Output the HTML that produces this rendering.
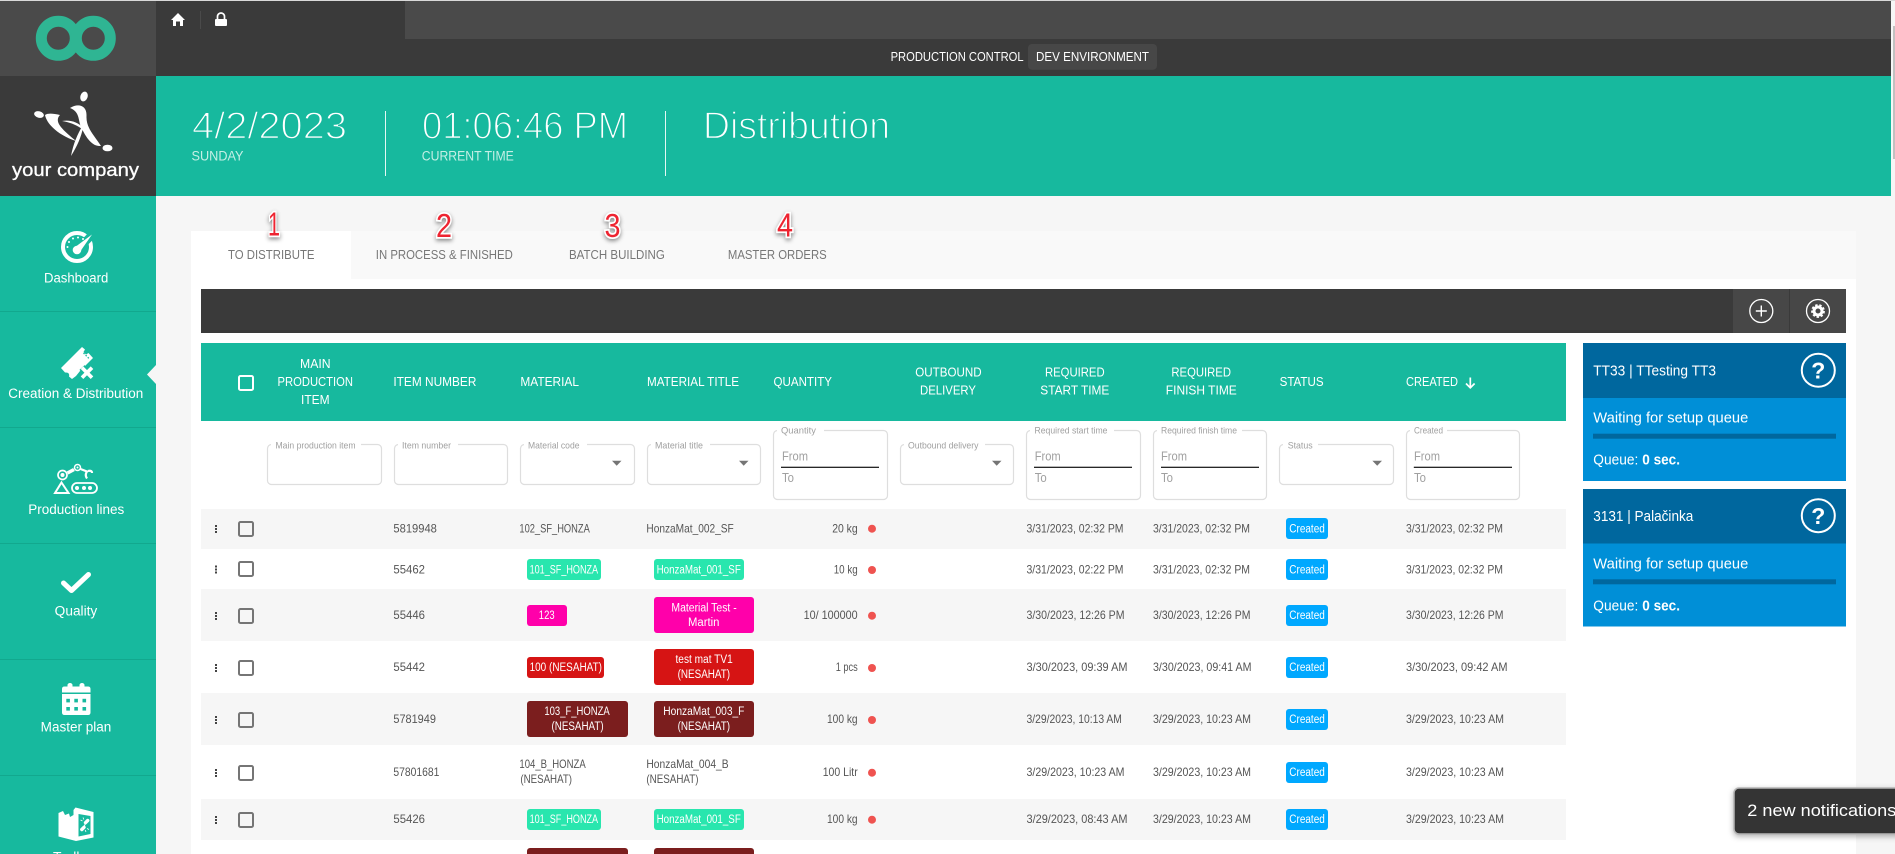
<!DOCTYPE html>
<html lang="en">
<head>
<meta charset="utf-8">
<title>Distribution</title>
<style>
html,body{margin:0;padding:0;width:1895px;height:854px;overflow:hidden;background:#f6f6f6}
svg{display:block;font-family:"Liberation Sans",Arial,sans-serif}
text{white-space:pre}
.h{font-size:12.5px;fill:#fff}
.r{font-size:12px;fill:#555}
.b{font-size:11.5px;fill:#fff}
.s{font-size:13.5px;fill:#fff}
.tab{font-size:12.5px;fill:#777}
.l{font-size:9.5px;fill:#a0a0a0}
.f{font-size:12.5px;fill:#a0a0a0}
.big{font-size:38px;fill:#fff;stroke:#17b99e;stroke-width:1.4px}
.sub{font-size:13.5px;fill:#c4efe5}
.c{font-size:15px;fill:#fff}
.n{font-size:33px;fill:#ee2431;stroke:#fff;stroke-width:3.5px;paint-order:stroke;filter:drop-shadow(0 2px 2px rgba(0,0,0,.45))}
.box{fill:#fff;stroke:#dedede;stroke-width:1.2}
.cb{fill:none;stroke:#757575;stroke-width:2}
.hole{fill:#fff}
</style>
</head>
<body>
<svg width="1895" height="854" viewBox="0 0 1895 854" xmlns="http://www.w3.org/2000/svg">
<!-- page -->
<rect width="1895" height="854" fill="#f6f6f6"/>
<rect width="1895" height="1" fill="#d9d9d9"/>
<rect x="1893" y="26" width="2" height="133" fill="#c1c1c1"/>

<!-- top bar -->
<rect x="0" y="1" width="156" height="75" fill="#4a4a4a"/>
<rect x="156" y="1" width="1735" height="75" fill="#3a3a3a"/>
<rect x="405" y="1" width="1486" height="38" fill="#4a4a4a"/>
<circle cx="58.3" cy="38.3" r="17" fill="none" stroke="#2fb593" stroke-width="11"/>
<circle cx="93.3" cy="38.3" r="17" fill="none" stroke="#2fb593" stroke-width="11"/>
<path d="M178 13 L185 20 H183 V26 H180 V21.5 H176 V26 H173 V20 H171Z" fill="#fff"/>
<rect x="200" y="11" width="1" height="18" fill="#4a4a4a"/>
<rect x="215" y="19" width="12" height="7" rx="1" fill="#fff"/>
<path d="M217.5 19.5V16.5a3.5 3.5 0 0 1 7 0V19.5" fill="none" stroke="#fff" stroke-width="1.7"/>
<text x="890.6" y="61" font-size="12.5" fill="#fff" textLength="133" lengthAdjust="spacingAndGlyphs">PRODUCTION CONTROL</text>
<rect x="1028" y="44" width="129" height="25.7" rx="4" fill="#474747"/>
<text x="1036" y="61" font-size="12.5" fill="#fff" textLength="113" lengthAdjust="spacingAndGlyphs">DEV ENVIRONMENT</text>

<!-- company -->
<rect x="0" y="76" width="156" height="120" fill="#3a3a3a"/>
<g fill="#fff">
<ellipse cx="84" cy="96.5" rx="3.6" ry="5" transform="rotate(20 84 96.5)"/>
<ellipse cx="39" cy="114.5" rx="5" ry="3.2" transform="rotate(15 39 114.5)"/>
<ellipse cx="107.5" cy="148" rx="5" ry="3.3"/>
<path d="M45 115C47 125 60 136 76 141C64 131 53 122 60 115C53 113.500 48 113 45 115Z"/>
<path d="M70 108C78 103 87 105 86.500 116C86 128 94 135 101 146C91 147 85 135 81 127C78 120 80 112 70 108Z"/>
<path d="M62 121C73 119 83 124 89 136C83 128 74 123 62 121Z"/>
<path d="M71 156C74 140 80 130 84 123C82 135 78 145 71 156Z"/>
</g>
<text x="12" y="176" font-size="18" fill="#fff" stroke="#fff" stroke-width=".3" textLength="127" lengthAdjust="spacingAndGlyphs">your company</text>

<!-- teal header -->
<rect x="156" y="76" width="1735" height="120" fill="#17b99e"/>
<text class="big" x="192" y="138.5" textLength="155" lengthAdjust="spacingAndGlyphs">4/2/2023</text>
<text class="sub" x="191.5" y="160.5" textLength="52" lengthAdjust="spacingAndGlyphs">SUNDAY</text>
<rect x="385" y="111" width="1" height="65" fill="#e4f7f3"/>
<text class="big" x="422" y="138.5" textLength="206" lengthAdjust="spacingAndGlyphs">01:06:46 PM</text>
<text class="sub" x="421.8" y="160.5" textLength="92" lengthAdjust="spacingAndGlyphs">CURRENT TIME</text>
<rect x="665" y="111" width="1" height="65" fill="#e4f7f3"/>
<text class="big" x="703" y="138.5" textLength="187" lengthAdjust="spacingAndGlyphs">Distribution</text>

<!-- sidebar -->
<rect x="0" y="196" width="156" height="658" fill="#17b99e"/>
<g fill="#12a88e">
<rect x="0" y="311" width="156" height="1"/>
<rect x="0" y="427" width="156" height="1"/>
<rect x="0" y="543" width="156" height="1"/>
<rect x="0" y="659" width="156" height="1"/>
<rect x="0" y="775" width="156" height="1"/>
</g>
<path d="M147 374.5L156 365V384Z" fill="#f6f6f6"/>
<!-- gauge -->
<circle cx="77" cy="247" r="14" fill="none" stroke="#fff" stroke-width="4"/>
<path d="M77 250L95 232" stroke="#17b99e" stroke-width="8"/>
<path d="M74.5 247.5L92 234.5L79.5 252.5Z" fill="#fff"/>
<circle cx="77" cy="250" r="4.3" fill="#fff"/>
<g fill="#fff"><circle cx="67.5" cy="247" r="1"/><circle cx="69" cy="242" r="1"/><circle cx="73" cy="238.5" r="1"/><circle cx="78" cy="237.5" r="1"/><circle cx="83" cy="239" r="1"/></g>
<text class="s" x="44" y="282.5" textLength="64.3" lengthAdjust="spacingAndGlyphs">Dashboard</text>
<!-- ticket -->
<path d="M61 368L82 347L85 349.5L83.5 352L86 354.5L88.5 353L93 358L80 371L76 376L72 379L69 376.5Q70 372 65 372.5Z" fill="#fff"/>
<path d="M83.5 353L89 358.5" stroke="#17b99e" stroke-width="1.3" stroke-dasharray="1.5 1.5"/>
<path d="M82 367.5L92 378M92 367.5L82 378" stroke="#17b99e" stroke-width="7"/>
<path d="M82 367.7L92 377.7M92 367.7L82 377.7" stroke="#fff" stroke-width="3.6"/>
<text class="s" x="8.3" y="398" textLength="135" lengthAdjust="spacingAndGlyphs">Creation &amp; Distribution</text>
<!-- robot -->
<g fill="none" stroke="#fff">
<circle cx="62.500" cy="475" r="4.5" stroke-width="1.7"/>
<circle cx="77.500" cy="467.5" r="3" stroke-width="1.5"/>
<path d="M67.500 473L74 469.500" stroke-width="3.5"/>
<path d="M80.500 469L87 471.500Q84.500 475 87 478.500M88 471Q92 470 92 473" stroke-width="2.2"/>
<path d="M61.500 482.500L68.500 493H55Z" stroke-width="2"/>
<rect x="72" y="483" width="25" height="10" rx="5" stroke-width="1.8"/>
</g>
<g fill="#fff"><circle cx="77" cy="488" r="2"/><circle cx="84" cy="488" r="2"/><circle cx="90" cy="488" r="2"/></g>
<circle cx="62.500" cy="475" r="2" fill="#fff"/><circle cx="77.500" cy="467.5" r="1" fill="#fff"/>
<text class="s" x="28.3" y="514" textLength="96" lengthAdjust="spacingAndGlyphs">Production lines</text>
<!-- check -->
<path d="M63.500 583L71.500 590.500L88.500 574.500" fill="none" stroke="#fff" stroke-width="5" stroke-linecap="round" stroke-linejoin="round"/>
<text class="s" x="54.7" y="615.5" textLength="42.6" lengthAdjust="spacingAndGlyphs">Quality</text>
<!-- calendar -->
<path d="M62 689q0-2.500 2.500-2.500H67.500V685a2.500 2 0 0 1 5 0v1.500h7V685a2.500 2 0 0 1 5 0v1.500h3.500q2.500 0 2.500 2.500V692.500H62Z" fill="#fff"/>
<path d="M62 694H90.500V712.500q0 2.500-2.500 2.500H64.500q-2.500 0-2.500-2.500Z" fill="#fff"/>
<g fill="#17b99e"><rect x="66.3" y="698.8" width="3.6" height="3.6"/><rect x="74.3" y="698.8" width="3.6" height="3.6"/><rect x="82.5" y="698.8" width="3.6" height="3.6"/><rect x="66.3" y="707" width="3.6" height="3.6"/><rect x="74.3" y="707" width="3.6" height="3.6"/><rect x="82.5" y="707" width="3.6" height="3.6"/></g>
<text class="s" x="40.7" y="731.5" textLength="70.6" lengthAdjust="spacingAndGlyphs">Master plan</text>
<!-- box -->
<path d="M58.500 813L63 811L65 815L69 813.500L70 817L73.500 815V810L75.500 807.500L93.500 812V837.500L76 841L58.500 836.500Z" fill="#fff"/>
<path d="M78.500 814L90.500 816V834L78.500 836.500Z" fill="#17b99e"/>
<path d="M81.800 829.500L84 827.300M85.500 822.700L87.700 820.500" stroke="#fff" stroke-width="3.400" stroke-linecap="round"/>
<path d="M81.800 829.500L87.700 820.500" stroke="#fff" stroke-width="1"/>
<path d="M80.500 820l2 1M83 817.500l.8 2M86 832l-.8-2M89 829.500l-2-1" stroke="#fff" stroke-width=".8"/>
<text class="s" x="53" y="861.5" textLength="48" lengthAdjust="spacingAndGlyphs">Trolleys</text>

<!-- panel + tabs -->
<rect x="191" y="231" width="1665" height="623" fill="#fff"/>
<rect x="351" y="231" width="1505" height="48" fill="#f9f9f9"/>
<text class="tab" x="228" y="259.2" textLength="86.5" lengthAdjust="spacingAndGlyphs">TO DISTRIBUTE</text>
<text class="tab" x="375.8" y="259.2" textLength="137" lengthAdjust="spacingAndGlyphs">IN PROCESS &amp; FINISHED</text>
<text class="tab" x="569" y="259.2" textLength="95.8" lengthAdjust="spacingAndGlyphs">BATCH BUILDING</text>
<text class="tab" x="727.9" y="259.2" textLength="98.8" lengthAdjust="spacingAndGlyphs">MASTER ORDERS</text>
<text class="n" x="268" y="235.500" textLength="12" lengthAdjust="spacingAndGlyphs">1</text>
<text class="n" x="436" y="237" textLength="16" lengthAdjust="spacingAndGlyphs">2</text>
<text class="n" x="604.500" y="237" textLength="16" lengthAdjust="spacingAndGlyphs">3</text>
<text class="n" x="777" y="236.500" textLength="16" lengthAdjust="spacingAndGlyphs">4</text>

<!-- toolbar -->
<rect x="201" y="289" width="1645" height="44" fill="#3a3a3a"/>
<rect x="1733" y="289" width="56" height="44" fill="#474747"/>
<rect x="1790" y="289" width="56" height="44" fill="#474747"/>
<circle cx="1761.3" cy="311" r="11.5" fill="none" stroke="#fff" stroke-width="1.3"/>
<path d="M1761.3 305.500v11M1755.8 311h11" stroke="#fff" stroke-width="1.4"/>
<circle cx="1818" cy="311" r="11.5" fill="none" stroke="#fff" stroke-width="1.3"/>
<circle cx="1818" cy="311" r="4" fill="none" stroke="#fff" stroke-width="3"/>
<circle cx="1818" cy="311" r="6" fill="none" stroke="#fff" stroke-width="1.8" stroke-dasharray="2.4 1.8"/>

<!-- table head -->
<rect x="201" y="343" width="1365" height="78" fill="#17b99e"/>
<rect x="239" y="376" width="14" height="14" rx="1.5" fill="none" stroke="#fff" stroke-width="2"/>
<text class="h" x="300" y="368" textLength="30.6" lengthAdjust="spacingAndGlyphs">MAIN</text>
<text class="h" x="277.5" y="386" textLength="75.5" lengthAdjust="spacingAndGlyphs">PRODUCTION</text>
<text class="h" x="301" y="404" textLength="28.6" lengthAdjust="spacingAndGlyphs">ITEM</text>
<text class="h" x="393.4" y="386" textLength="83" lengthAdjust="spacingAndGlyphs">ITEM NUMBER</text>
<text class="h" x="520.4" y="386" textLength="58.6" lengthAdjust="spacingAndGlyphs">MATERIAL</text>
<text class="h" x="647" y="386" textLength="92" lengthAdjust="spacingAndGlyphs">MATERIAL TITLE</text>
<text class="h" x="773.5" y="386" textLength="58.5" lengthAdjust="spacingAndGlyphs">QUANTITY</text>
<text class="h" x="915.3" y="376.5" textLength="66.3" lengthAdjust="spacingAndGlyphs">OUTBOUND</text>
<text class="h" x="920" y="394.5" textLength="56" lengthAdjust="spacingAndGlyphs">DELIVERY</text>
<text class="h" x="1045" y="376.5" textLength="59.6" lengthAdjust="spacingAndGlyphs">REQUIRED</text>
<text class="h" x="1040.3" y="394.5" textLength="69" lengthAdjust="spacingAndGlyphs">START TIME</text>
<text class="h" x="1171.4" y="376.5" textLength="59.6" lengthAdjust="spacingAndGlyphs">REQUIRED</text>
<text class="h" x="1165.8" y="394.5" textLength="71" lengthAdjust="spacingAndGlyphs">FINISH TIME</text>
<text class="h" x="1279.6" y="386" textLength="44" lengthAdjust="spacingAndGlyphs">STATUS</text>
<text class="h" x="1406" y="386" textLength="52" lengthAdjust="spacingAndGlyphs">CREATED</text>
<path d="M1470.3 377.500V387.500M1466 383.500L1470.3 387.800L1474.6 383.500" fill="none" stroke="#fff" stroke-width="1.7"/>

<!-- filters -->
<g>
<rect class="box" x="267.5" y="444.5" width="114" height="40" rx="4"/><rect class="hole" x="271" y="441" width="90" height="7"/>
<text class="l" x="275.5" y="448.3" textLength="80" lengthAdjust="spacingAndGlyphs">Main production item</text>
<rect class="box" x="394.5" y="444.5" width="113" height="40" rx="4"/><rect class="hole" x="398" y="441" width="60" height="7"/>
<text class="l" x="402" y="448.3" textLength="49" lengthAdjust="spacingAndGlyphs">Item number</text>
<rect class="box" x="520.5" y="444.5" width="114" height="40" rx="4"/><rect class="hole" x="524" y="441" width="63" height="7"/>
<text class="l" x="528" y="448.3" textLength="51.5" lengthAdjust="spacingAndGlyphs">Material code</text>
<path d="M612 460.7H621.5L616.7 465.7Z" fill="#757575"/>
<rect class="box" x="647.5" y="444.5" width="113" height="40" rx="4"/><rect class="hole" x="651" y="441" width="59" height="7"/>
<text class="l" x="655" y="448.3" textLength="48" lengthAdjust="spacingAndGlyphs">Material title</text>
<path d="M739 460.7H748.5L743.7 465.7Z" fill="#757575"/>
<rect class="box" x="773.5" y="430.5" width="114" height="69" rx="4"/><rect class="hole" x="777" y="427" width="47" height="7"/>
<text class="l" x="781" y="433.5" textLength="35" lengthAdjust="spacingAndGlyphs">Quantity</text>
<text class="f" x="782" y="460.5" textLength="26" lengthAdjust="spacingAndGlyphs">From</text>
<rect x="781" y="466.7" width="98" height="1.2" fill="#111"/>
<text class="f" x="782" y="481.8" textLength="12" lengthAdjust="spacingAndGlyphs">To</text>
<rect class="box" x="900.5" y="444.5" width="113" height="40" rx="4"/><rect class="hole" x="904" y="441" width="81" height="7"/>
<text class="l" x="908" y="448.3" textLength="70.5" lengthAdjust="spacingAndGlyphs">Outbound delivery</text>
<path d="M992 460.7H1001.5L996.7 465.7Z" fill="#757575"/>
<rect class="box" x="1026.5" y="430.5" width="114" height="69" rx="4"/><rect class="hole" x="1030" y="427" width="84" height="7"/>
<text class="l" x="1034.5" y="433.5" textLength="73" lengthAdjust="spacingAndGlyphs">Required start time</text>
<text class="f" x="1034.7" y="460.5" textLength="26" lengthAdjust="spacingAndGlyphs">From</text>
<rect x="1034" y="466.7" width="98" height="1.2" fill="#111"/>
<text class="f" x="1034.7" y="481.8" textLength="12" lengthAdjust="spacingAndGlyphs">To</text>
<rect class="box" x="1153.5" y="430.5" width="113" height="69" rx="4"/><rect class="hole" x="1157" y="427" width="85" height="7"/>
<text class="l" x="1161" y="433.5" textLength="76" lengthAdjust="spacingAndGlyphs">Required finish time</text>
<text class="f" x="1161" y="460.5" textLength="26" lengthAdjust="spacingAndGlyphs">From</text>
<rect x="1161" y="466.7" width="98" height="1.2" fill="#111"/>
<text class="f" x="1161" y="481.8" textLength="12" lengthAdjust="spacingAndGlyphs">To</text>
<rect class="box" x="1279.5" y="444.5" width="114" height="40" rx="4"/><rect class="hole" x="1283" y="441" width="35" height="7"/>
<text class="l" x="1287.7" y="448.3" textLength="25" lengthAdjust="spacingAndGlyphs">Status</text>
<path d="M1372.4 460.7H1382L1377.2 465.7Z" fill="#757575"/>
<rect class="box" x="1406.5" y="430.5" width="113" height="69" rx="4"/><rect class="hole" x="1410" y="427" width="37" height="7"/>
<text class="l" x="1414" y="433.5" textLength="29" lengthAdjust="spacingAndGlyphs">Created</text>
<text class="f" x="1414" y="460.5" textLength="26" lengthAdjust="spacingAndGlyphs">From</text>
<rect x="1413.8" y="466.7" width="98.2" height="1.2" fill="#111"/>
<text class="f" x="1414" y="481.8" textLength="12" lengthAdjust="spacingAndGlyphs">To</text>
</g>

<!-- rows bg -->
<g fill="#f6f6f6">
<rect x="201" y="509" width="1365" height="40"/>
<rect x="201" y="589" width="1365" height="52"/>
<rect x="201" y="693" width="1365" height="52"/>
<rect x="201" y="799" width="1365" height="41"/>
</g>

<!-- kebab + checkbox -->
<g fill="#444">
<rect x="215" y="525" width="2" height="2"/><rect x="215" y="528" width="2" height="2"/><rect x="215" y="531" width="2" height="2"/>
<rect x="215" y="565.5" width="2" height="2"/><rect x="215" y="568.5" width="2" height="2"/><rect x="215" y="571.5" width="2" height="2"/>
<rect x="215" y="612" width="2" height="2"/><rect x="215" y="615" width="2" height="2"/><rect x="215" y="618" width="2" height="2"/>
<rect x="215" y="664" width="2" height="2"/><rect x="215" y="667" width="2" height="2"/><rect x="215" y="670" width="2" height="2"/>
<rect x="215" y="716" width="2" height="2"/><rect x="215" y="719" width="2" height="2"/><rect x="215" y="722" width="2" height="2"/>
<rect x="215" y="769" width="2" height="2"/><rect x="215" y="772" width="2" height="2"/><rect x="215" y="775" width="2" height="2"/>
<rect x="215" y="816" width="2" height="2"/><rect x="215" y="819" width="2" height="2"/><rect x="215" y="822" width="2" height="2"/>
</g>
<rect class="cb" x="239" y="522" width="14" height="14" rx="1.5"/>
<rect class="cb" x="239" y="562" width="14" height="14" rx="1.5"/>
<rect class="cb" x="239" y="609" width="14" height="14" rx="1.5"/>
<rect class="cb" x="239" y="661" width="14" height="14" rx="1.5"/>
<rect class="cb" x="239" y="713" width="14" height="14" rx="1.5"/>
<rect class="cb" x="239" y="766" width="14" height="14" rx="1.5"/>
<rect class="cb" x="239" y="813" width="14" height="14" rx="1.5"/>

<!-- item numbers -->
<text class="r" x="393.4" y="532.3" textLength="43.5" lengthAdjust="spacingAndGlyphs">5819948</text>
<text class="r" x="393.4" y="573.3" textLength="31.6" lengthAdjust="spacingAndGlyphs">55462</text>
<text class="r" x="393.4" y="619" textLength="31.6" lengthAdjust="spacingAndGlyphs">55446</text>
<text class="r" x="393.4" y="671" textLength="31.6" lengthAdjust="spacingAndGlyphs">55442</text>
<text class="r" x="393.4" y="723" textLength="42.5" lengthAdjust="spacingAndGlyphs">5781949</text>
<text class="r" x="393.4" y="776" textLength="46" lengthAdjust="spacingAndGlyphs">57801681</text>
<text class="r" x="393.4" y="823" textLength="31.6" lengthAdjust="spacingAndGlyphs">55426</text>

<!-- materials -->
<text class="r" x="519.4" y="532.3" textLength="70.4" lengthAdjust="spacingAndGlyphs">102_SF_HONZA</text>
<text class="r" x="646.4" y="532.3" textLength="87.3" lengthAdjust="spacingAndGlyphs">HonzaMat_002_SF</text>

<rect x="527" y="559" width="74" height="21" rx="3" fill="#29e6ae"/>
<text class="b" x="529.6" y="573.3" textLength="68.5" lengthAdjust="spacingAndGlyphs">101_SF_HONZA</text>
<rect x="654" y="559" width="90" height="21" rx="3" fill="#29e6ae"/>
<text class="b" x="656.6" y="573.3" textLength="84.2" lengthAdjust="spacingAndGlyphs">HonzaMat_001_SF</text>

<rect x="527" y="605" width="40" height="21" rx="3" fill="#ff00aa"/>
<text class="b" x="538.8" y="619" textLength="15.8" lengthAdjust="spacingAndGlyphs">123</text>
<rect x="654" y="597" width="100" height="36" rx="3" fill="#ff00aa"/>
<text class="b" x="671.4" y="611.3" textLength="65.3" lengthAdjust="spacingAndGlyphs">Material Test -</text>
<text class="b" x="688" y="626" textLength="31.4" lengthAdjust="spacingAndGlyphs">Martin</text>

<rect x="527" y="657" width="77" height="21" rx="3" fill="#d61414"/>
<text class="b" x="529.6" y="671" textLength="72.4" lengthAdjust="spacingAndGlyphs">100 (NESAHAT)</text>
<rect x="654" y="649" width="100" height="36" rx="3" fill="#d61414"/>
<text class="b" x="675.5" y="663" textLength="57.2" lengthAdjust="spacingAndGlyphs">test mat TV1</text>
<text class="b" x="677.6" y="678" textLength="52.5" lengthAdjust="spacingAndGlyphs">(NESAHAT)</text>

<rect x="527" y="701" width="101" height="36" rx="3" fill="#7b1e1e"/>
<text class="b" x="544.4" y="715" textLength="65.3" lengthAdjust="spacingAndGlyphs">103_F_HONZA</text>
<text class="b" x="551.5" y="730" textLength="52.1" lengthAdjust="spacingAndGlyphs">(NESAHAT)</text>
<rect x="654" y="701" width="100" height="36" rx="3" fill="#7b1e1e"/>
<text class="b" x="663.3" y="715" textLength="81.1" lengthAdjust="spacingAndGlyphs">HonzaMat_003_F</text>
<text class="b" x="677.6" y="730" textLength="52.5" lengthAdjust="spacingAndGlyphs">(NESAHAT)</text>

<text class="r" x="519.4" y="768" textLength="66.3" lengthAdjust="spacingAndGlyphs">104_B_HONZA</text>
<text class="r" x="520.4" y="783" textLength="51.6" lengthAdjust="spacingAndGlyphs">(NESAHAT)</text>
<text class="r" x="646.4" y="768" textLength="82.2" lengthAdjust="spacingAndGlyphs">HonzaMat_004_B</text>
<text class="r" x="646.4" y="783" textLength="52.1" lengthAdjust="spacingAndGlyphs">(NESAHAT)</text>

<rect x="527" y="809" width="74" height="21" rx="3" fill="#29e6ae"/>
<text class="b" x="529.6" y="823" textLength="68.5" lengthAdjust="spacingAndGlyphs">101_SF_HONZA</text>
<rect x="654" y="809" width="90" height="21" rx="3" fill="#29e6ae"/>
<text class="b" x="656.6" y="823" textLength="84.2" lengthAdjust="spacingAndGlyphs">HonzaMat_001_SF</text>

<rect x="527" y="848" width="101" height="20" rx="3" fill="#7b1e1e"/>
<rect x="654" y="848" width="100" height="20" rx="3" fill="#7b1e1e"/>

<!-- quantity -->
<text class="r" x="832.2" y="532.3" textLength="25.5" lengthAdjust="spacingAndGlyphs">20 kg</text>
<text class="r" x="833.7" y="573.3" textLength="24" lengthAdjust="spacingAndGlyphs">10 kg</text>
<text class="r" x="803.6" y="619" textLength="54" lengthAdjust="spacingAndGlyphs">10/ 100000</text>
<text class="r" x="835.7" y="671" textLength="22" lengthAdjust="spacingAndGlyphs">1 pcs</text>
<text class="r" x="827" y="723" textLength="30.6" lengthAdjust="spacingAndGlyphs">100 kg</text>
<text class="r" x="822.7" y="776" textLength="35" lengthAdjust="spacingAndGlyphs">100 Litr</text>
<text class="r" x="827" y="823" textLength="30.6" lengthAdjust="spacingAndGlyphs">100 kg</text>
<g fill="#ef5350">
<circle cx="872" cy="528.7" r="4"/><circle cx="872" cy="570" r="4"/><circle cx="872" cy="615.7" r="4"/><circle cx="872" cy="668" r="4"/><circle cx="872" cy="720" r="4"/><circle cx="872" cy="772.7" r="4"/><circle cx="872" cy="819.7" r="4"/>
</g>

<!-- dates col 1 -->
<text class="r" x="1026.5" y="532.3" textLength="97" lengthAdjust="spacingAndGlyphs">3/31/2023, 02:32 PM</text>
<text class="r" x="1026.5" y="573.3" textLength="97" lengthAdjust="spacingAndGlyphs">3/31/2023, 02:22 PM</text>
<text class="r" x="1026.5" y="619" textLength="98" lengthAdjust="spacingAndGlyphs">3/30/2023, 12:26 PM</text>
<text class="r" x="1026.5" y="671" textLength="101" lengthAdjust="spacingAndGlyphs">3/30/2023, 09:39 AM</text>
<text class="r" x="1026.5" y="723" textLength="95.4" lengthAdjust="spacingAndGlyphs">3/29/2023, 10:13 AM</text>
<text class="r" x="1026.5" y="776" textLength="98" lengthAdjust="spacingAndGlyphs">3/29/2023, 10:23 AM</text>
<text class="r" x="1026.5" y="823" textLength="101" lengthAdjust="spacingAndGlyphs">3/29/2023, 08:43 AM</text>
<!-- dates col 2 -->
<text class="r" x="1153" y="532.3" textLength="97" lengthAdjust="spacingAndGlyphs">3/31/2023, 02:32 PM</text>
<text class="r" x="1153" y="573.3" textLength="97" lengthAdjust="spacingAndGlyphs">3/31/2023, 02:32 PM</text>
<text class="r" x="1153" y="619" textLength="97.5" lengthAdjust="spacingAndGlyphs">3/30/2023, 12:26 PM</text>
<text class="r" x="1153" y="671" textLength="98.5" lengthAdjust="spacingAndGlyphs">3/30/2023, 09:41 AM</text>
<text class="r" x="1153" y="723" textLength="98" lengthAdjust="spacingAndGlyphs">3/29/2023, 10:23 AM</text>
<text class="r" x="1153" y="776" textLength="98" lengthAdjust="spacingAndGlyphs">3/29/2023, 10:23 AM</text>
<text class="r" x="1153" y="823" textLength="98" lengthAdjust="spacingAndGlyphs">3/29/2023, 10:23 AM</text>
<!-- status -->
<g fill="#00a8ff">
<rect x="1286" y="518" width="42" height="21" rx="3"/><rect x="1286" y="559" width="42" height="21" rx="3"/><rect x="1286" y="605" width="42" height="21" rx="3"/><rect x="1286" y="657" width="42" height="21" rx="3"/><rect x="1286" y="709" width="42" height="21" rx="3"/><rect x="1286" y="762" width="42" height="21" rx="3"/><rect x="1286" y="809" width="42" height="21" rx="3"/>
</g>
<text class="b" x="1289.3" y="532.3" textLength="35.5" lengthAdjust="spacingAndGlyphs">Created</text>
<text class="b" x="1289.3" y="573.3" textLength="35.5" lengthAdjust="spacingAndGlyphs">Created</text>
<text class="b" x="1289.3" y="619" textLength="35.5" lengthAdjust="spacingAndGlyphs">Created</text>
<text class="b" x="1289.3" y="671" textLength="35.5" lengthAdjust="spacingAndGlyphs">Created</text>
<text class="b" x="1289.3" y="723" textLength="35.5" lengthAdjust="spacingAndGlyphs">Created</text>
<text class="b" x="1289.3" y="776" textLength="35.5" lengthAdjust="spacingAndGlyphs">Created</text>
<text class="b" x="1289.3" y="823" textLength="35.5" lengthAdjust="spacingAndGlyphs">Created</text>
<!-- dates col 3 -->
<text class="r" x="1406" y="532.3" textLength="97" lengthAdjust="spacingAndGlyphs">3/31/2023, 02:32 PM</text>
<text class="r" x="1406" y="573.3" textLength="97" lengthAdjust="spacingAndGlyphs">3/31/2023, 02:32 PM</text>
<text class="r" x="1406" y="619" textLength="97.5" lengthAdjust="spacingAndGlyphs">3/30/2023, 12:26 PM</text>
<text class="r" x="1406" y="671" textLength="101.5" lengthAdjust="spacingAndGlyphs">3/30/2023, 09:42 AM</text>
<text class="r" x="1406" y="723" textLength="98" lengthAdjust="spacingAndGlyphs">3/29/2023, 10:23 AM</text>
<text class="r" x="1406" y="776" textLength="98" lengthAdjust="spacingAndGlyphs">3/29/2023, 10:23 AM</text>
<text class="r" x="1406" y="823" textLength="98" lengthAdjust="spacingAndGlyphs">3/29/2023, 10:23 AM</text>

<!-- right cards -->
<rect x="1583" y="343" width="263" height="55" fill="#00679e"/>
<rect x="1583" y="398" width="263" height="83" fill="#008fd7"/>
<text class="c" x="1593.3" y="375.5" textLength="122.7" lengthAdjust="spacingAndGlyphs">TT33 | TTesting TT3</text>
<circle cx="1818.3" cy="370.3" r="16.5" fill="none" stroke="#fff" stroke-width="2"/>
<text x="1818.3" y="378.5" font-size="23" font-weight="700" fill="#fff" text-anchor="middle">?</text>
<text class="c" x="1593.3" y="422.5" textLength="155" lengthAdjust="spacingAndGlyphs">Waiting for setup queue</text>
<rect x="1593" y="433.7" width="243" height="5" fill="#00679e"/>
<text class="c" x="1593.3" y="464.5" textLength="45" lengthAdjust="spacingAndGlyphs">Queue:</text>
<text class="c" x="1642.3" y="464.5" font-weight="700" textLength="37.7" lengthAdjust="spacingAndGlyphs">0 sec.</text>

<rect x="1583" y="489" width="263" height="54.5" fill="#00679e"/>
<rect x="1583" y="543.5" width="263" height="83" fill="#008fd7"/>
<text class="c" x="1593.3" y="521" textLength="100" lengthAdjust="spacingAndGlyphs">3131 | Palačinka</text>
<circle cx="1818.3" cy="515.7" r="16.5" fill="none" stroke="#fff" stroke-width="2"/>
<text x="1818.3" y="524" font-size="23" font-weight="700" fill="#fff" text-anchor="middle">?</text>
<text class="c" x="1593.3" y="568.3" textLength="155" lengthAdjust="spacingAndGlyphs">Waiting for setup queue</text>
<rect x="1593" y="579.3" width="243" height="5" fill="#00679e"/>
<text class="c" x="1593.3" y="610.3" textLength="45" lengthAdjust="spacingAndGlyphs">Queue:</text>
<text class="c" x="1642.3" y="610.3" font-weight="700" textLength="37.7" lengthAdjust="spacingAndGlyphs">0 sec.</text>

<!-- notification -->
<rect x="1734" y="788" width="200" height="46" rx="5" fill="#343434" stroke="#b5b5b5" stroke-width="1.5" style="filter:drop-shadow(0 2px 3px rgba(0,0,0,.3))"/>
<text x="1747.3" y="816" font-size="17" fill="#fff" textLength="149" lengthAdjust="spacingAndGlyphs">2 new notifications</text>
</svg>
</body>
</html>
